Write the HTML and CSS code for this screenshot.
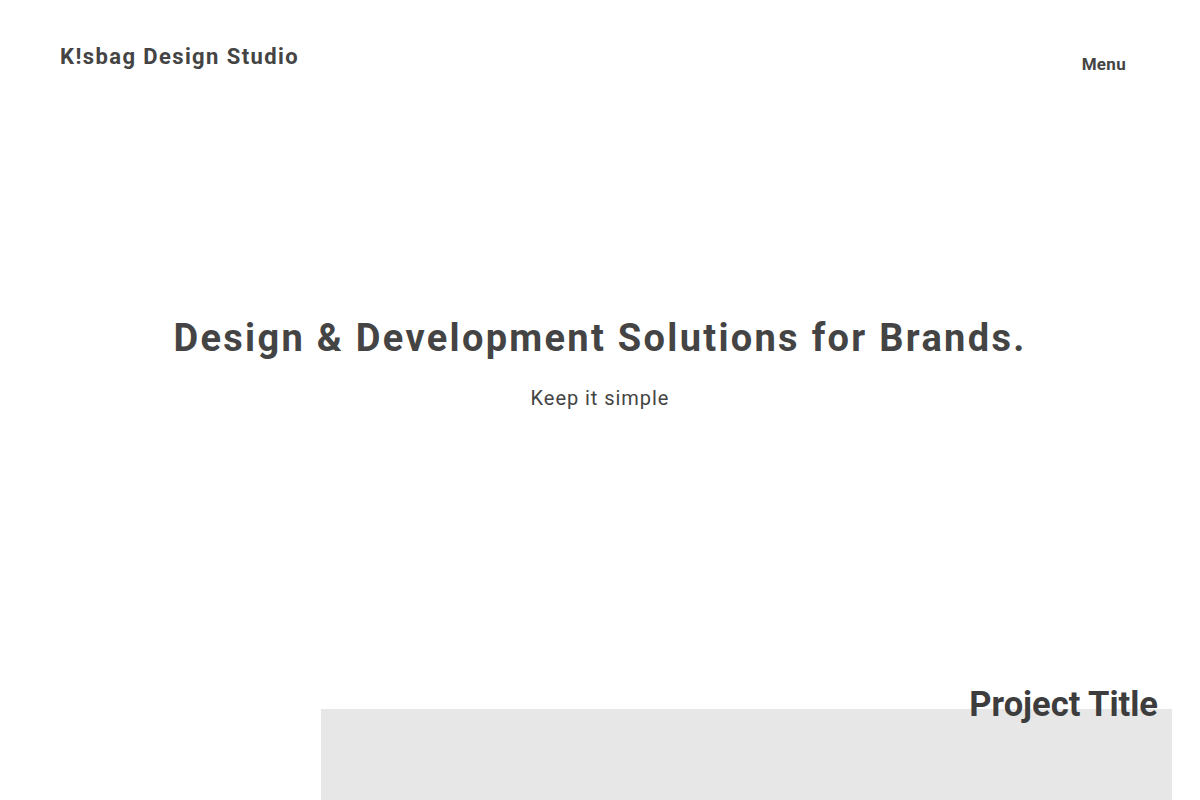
FILE: index.html
```html
<!DOCTYPE html>
<html lang="en">
<head>
<meta charset="utf-8">
<title>K!sbag Design Studio</title>
<link rel="stylesheet" href="styles.css">
</head>
<body>
<header class="site-header">
  <a class="logo" href="#">K!sbag Design Studio</a>
  <nav class="menu">Menu</nav>
</header>
<main>
  <section class="hero">
    <h1 class="hero-title">Design &amp; Development Solutions for Brands.</h1>
    <p class="hero-sub">Keep it simple</p>
  </section>
  <section class="project">
    <h2 class="project-title">Project Title</h2>
    <div class="project-image"></div>
  </section>
</main>
</body>
</html>
```
FILE: styles.css
```css
* { box-sizing: border-box; }
html, body { margin: 0; padding: 0; }
body {
  background: #ffffff;
  color: #444444;
  font-family: Roboto, "Liberation Sans", Arial, sans-serif;
  overflow: hidden;
  height: 800px;
}
.site-header {
  display: flex;
  justify-content: space-between;
  align-items: flex-start;
  padding: 43px 74px 0 60px;
}
.logo {
  color: #444444;
  text-decoration: none;
  font-weight: 700;
  font-size: 22px;
  letter-spacing: 1.4px;
  line-height: 28px;
}
.menu {
  font-weight: 700;
  font-size: 17px;
  letter-spacing: 0.3px;
  line-height: 20px;
  margin-top: 11px;
}
.hero {
  display: flex;
  flex-direction: column;
  align-items: center;
  padding-top: 240px;
}
.hero-title {
  margin: 0;
  font-size: 38px;
  font-weight: 700;
  letter-spacing: 2.3px;
  line-height: 48px;
}
.hero-sub {
  margin: 23px 0 0;
  font-size: 20px;
  font-weight: 400;
  letter-spacing: 0.95px;
  line-height: 26px;
}
.project {
  position: relative;
  margin-top: 298px;
  padding: 0 28px 0 321px;
}
.project-image {
  height: 200px;
  background: #e7e7e7;
}
.project-title {
  position: absolute;
  right: 42px;
  top: -25px;
  margin: 0;
  font-size: 34.5px;
  font-weight: 700;
  line-height: 40px;
  color: #3d3d3d;
}
```
